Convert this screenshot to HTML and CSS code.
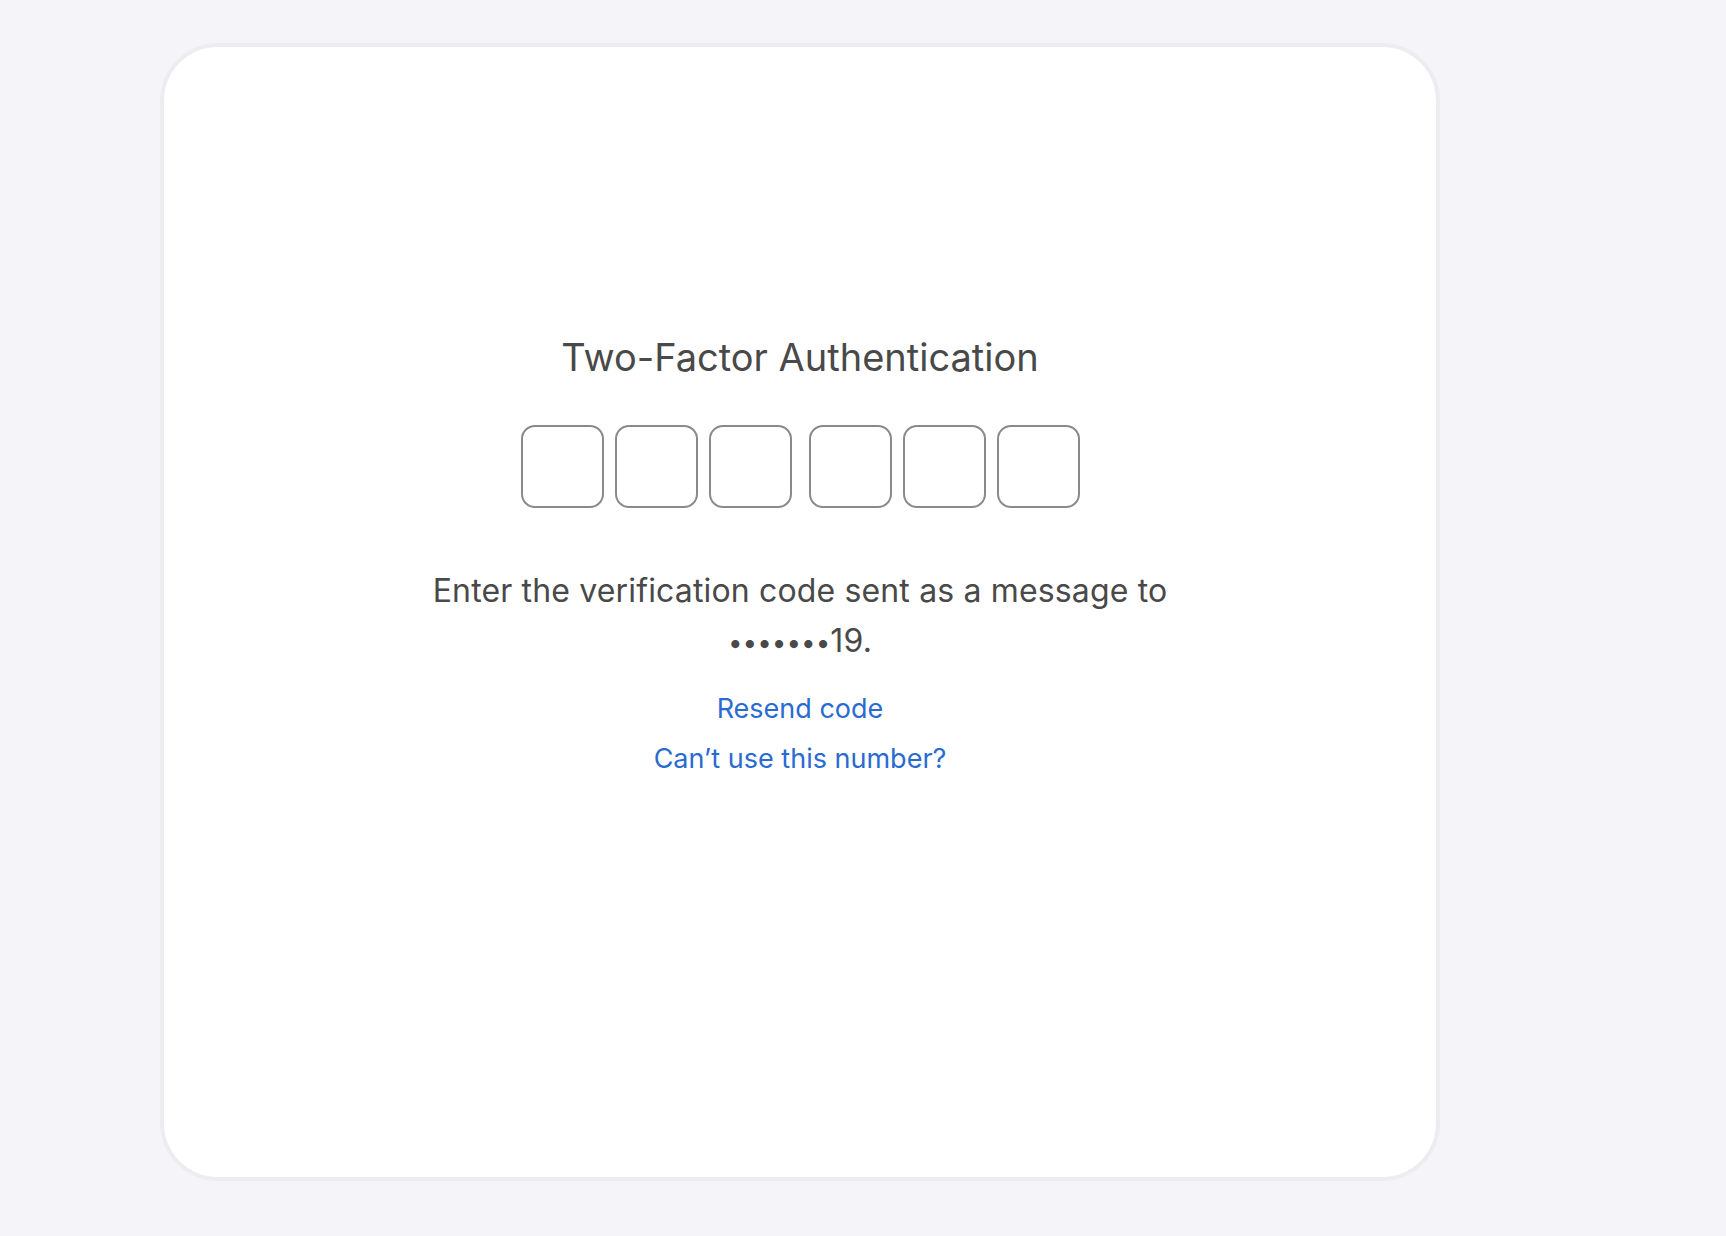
FILE: index.html
```html
<!DOCTYPE html>
<html lang="en">
<head>
<meta charset="utf-8">
<title>Two-Factor Authentication</title>
<link rel="stylesheet" href="styles.css">
</head>
<body>
<main class="page">
  <section class="card">
    <h1 class="title">Two-Factor Authentication</h1>
    <div class="code">
      <div class="code-group">
        <input class="digit" type="text" maxlength="1" aria-label="Digit 1">
        <input class="digit" type="text" maxlength="1" aria-label="Digit 2">
        <input class="digit" type="text" maxlength="1" aria-label="Digit 3">
      </div>
      <div class="code-group">
        <input class="digit" type="text" maxlength="1" aria-label="Digit 4">
        <input class="digit" type="text" maxlength="1" aria-label="Digit 5">
        <input class="digit" type="text" maxlength="1" aria-label="Digit 6">
      </div>
    </div>
    <p class="message">Enter the verification code sent as a message to <span class="phone"><span class="dots">•••••••</span>19.</span></p>
    <div class="links">
      <a class="link" href="#">Resend code</a>
      <a class="link" href="#">Can’t use this number?</a>
    </div>
  </section>
</main>
</body>
</html>
```

FILE: styles.css
```css
* {
  box-sizing: border-box;
}

html, body {
  margin: 0;
  padding: 0;
}

body {
  background: #f5f5f9;
  font-family: Inter, "Noto Sans", "Liberation Sans", sans-serif;
  color: #494949;
  min-height: 1236px;
}

.page {
  padding: 43px 0 0 160px;
}

.card {
  width: 1280px;
  height: 1138px;
  background: #ffffff;
  border: 4px solid #ececf1;
  border-radius: 58px;
  display: flex;
  flex-direction: column;
  align-items: center;
  padding-top: 287px;
}

.title {
  margin: 0;
  font-size: 38px;
  line-height: 46px;
  font-weight: 400;
  color: #494949;
  letter-spacing: 0;
}

.code {
  display: flex;
  gap: 17px;
  margin-top: 45px;
}

.code-group {
  display: flex;
  gap: 11px;
}

.digit {
  width: 83px;
  height: 83px;
  border: 2px solid #8a8a8e;
  border-radius: 14px;
  background: #ffffff;
  padding: 0;
  margin: 0;
  font: inherit;
  text-align: center;
  outline: none;
}

.message {
  margin: 58px 0 0;
  max-width: 800px;
  text-align: center;
  font-size: 32px;
  line-height: 50px;
  letter-spacing: 0.15px;
  color: #494949;
}

.phone {
  white-space: nowrap;
}

.dots {
  font-size: 26px;
  letter-spacing: 0;
}

.links {
  display: flex;
  flex-direction: column;
  align-items: center;
  gap: 10px;
  margin-top: 21px;
}

.link {
  font-size: 27px;
  line-height: 40px;
  color: #2a6bd1;
  text-decoration: none;
}
```
